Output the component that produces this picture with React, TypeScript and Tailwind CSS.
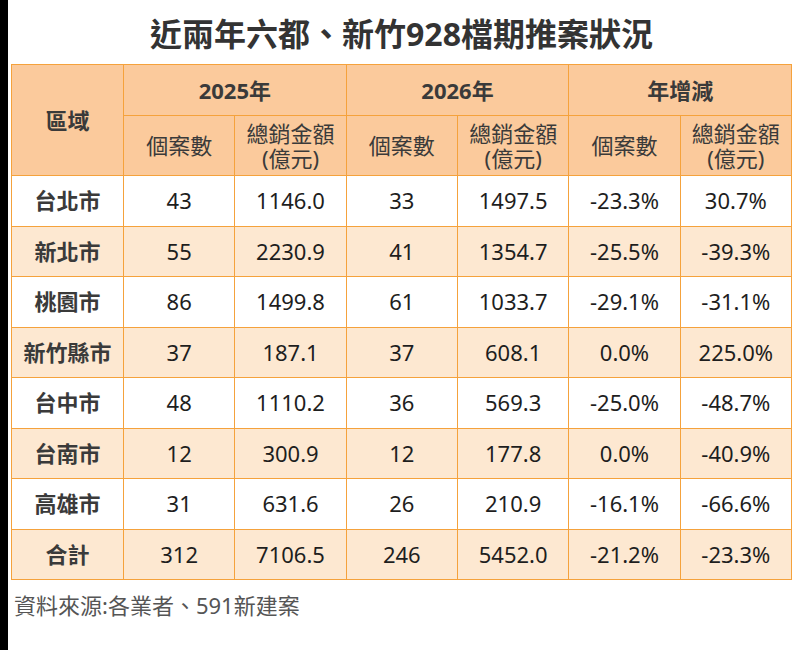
import React from 'react';

type Row = {
  name: string;
  c25: string;
  s25: string;
  c26: string;
  s26: string;
  dc: string;
  ds: string;
};

const rows: Row[] = [
  { name: '台北市', c25: '43', s25: '1146.0', c26: '33', s26: '1497.5', dc: '-23.3%', ds: '30.7%' },
  { name: '新北市', c25: '55', s25: '2230.9', c26: '41', s26: '1354.7', dc: '-25.5%', ds: '-39.3%' },
  { name: '桃園市', c25: '86', s25: '1499.8', c26: '61', s26: '1033.7', dc: '-29.1%', ds: '-31.1%' },
  { name: '新竹縣市', c25: '37', s25: '187.1', c26: '37', s26: '608.1', dc: '0.0%', ds: '225.0%' },
  { name: '台中市', c25: '48', s25: '1110.2', c26: '36', s26: '569.3', dc: '-25.0%', ds: '-48.7%' },
  { name: '台南市', c25: '12', s25: '300.9', c26: '12', s26: '177.8', dc: '0.0%', ds: '-40.9%' },
  { name: '高雄市', c25: '31', s25: '631.6', c26: '26', s26: '210.9', dc: '-16.1%', ds: '-66.6%' },
  { name: '合計', c25: '312', s25: '7106.5', c26: '246', s26: '5452.0', dc: '-21.2%', ds: '-23.3%' },
];

const cjk = "font-['Noto_Sans','Noto_Sans_CJK_TC',sans-serif]";

function SalesHead() {
  return (
    <th className="border border-[#f5a23c] font-normal">
      <span className="block leading-[25px]">總銷金額</span>
      <span className="block leading-[25px]">(億元)</span>
    </th>
  );
}

export default function App() {
  return (
    <div className={`flex w-[800px] h-[650px] bg-white ${cjk}`}>
      {/* 左側黑邊 */}
      <div className="w-[8px] bg-black shrink-0" />
      <div className="flex flex-col pl-[3px]">
        <h1 className="h-[64px] pt-[13px] text-center text-[32px] leading-[42px] font-bold text-[#333] w-[781px]">
          近兩年六都、新竹928檔期推案狀況
        </h1>

        <table className="table-fixed w-[781px] border-collapse border border-[#f8b56c] text-center">
          <colgroup>
            <col className="w-[112px]" />
            <col />
            <col />
            <col />
            <col />
            <col />
            <col />
          </colgroup>
          <thead className="bg-[#fbca9c] text-[#3a3a3a]">
            <tr className="h-[51px] text-[22px]">
              <th rowSpan={2} className="border border-[#f5a23c] font-bold">區域</th>
              <th colSpan={2} className="border border-[#f5a23c] font-bold">2025年</th>
              <th colSpan={2} className="border border-[#f5a23c] font-bold">2026年</th>
              <th colSpan={2} className="border border-[#f5a23c] font-bold">年增減</th>
            </tr>
            <tr className="h-[60px] text-[22px]">
              <th className="border border-[#f5a23c] font-normal">個案數</th>
              <SalesHead />
              <th className="border border-[#f5a23c] font-normal">個案數</th>
              <SalesHead />
              <th className="border border-[#f5a23c] font-normal">個案數</th>
              <SalesHead />
            </tr>
          </thead>
          <tbody className="text-[22px] text-[#1e1e1e]">
            {rows.map((r, i) => (
              <tr key={r.name} className={`h-[50.5px] ${i % 2 === 1 ? 'bg-[#fde8d1]' : 'bg-white'}`}>
                <td className="border border-[#f5a23c] font-bold text-[#3a3a3a]">{r.name}</td>
                <td className="border border-[#f5a23c]">{r.c25}</td>
                <td className="border border-[#f5a23c]">{r.s25}</td>
                <td className="border border-[#f5a23c]">{r.c26}</td>
                <td className="border border-[#f5a23c]">{r.s26}</td>
                <td className="border border-[#f5a23c]">{r.dc}</td>
                <td className="border border-[#f5a23c]">{r.ds}</td>
              </tr>
            ))}
          </tbody>
        </table>

        <p className="mt-[11px] pl-[3px] text-[22px] leading-[28px] text-[#555]">
          資料來源:各業者、591新建案
        </p>
      </div>
    </div>
  );
}
